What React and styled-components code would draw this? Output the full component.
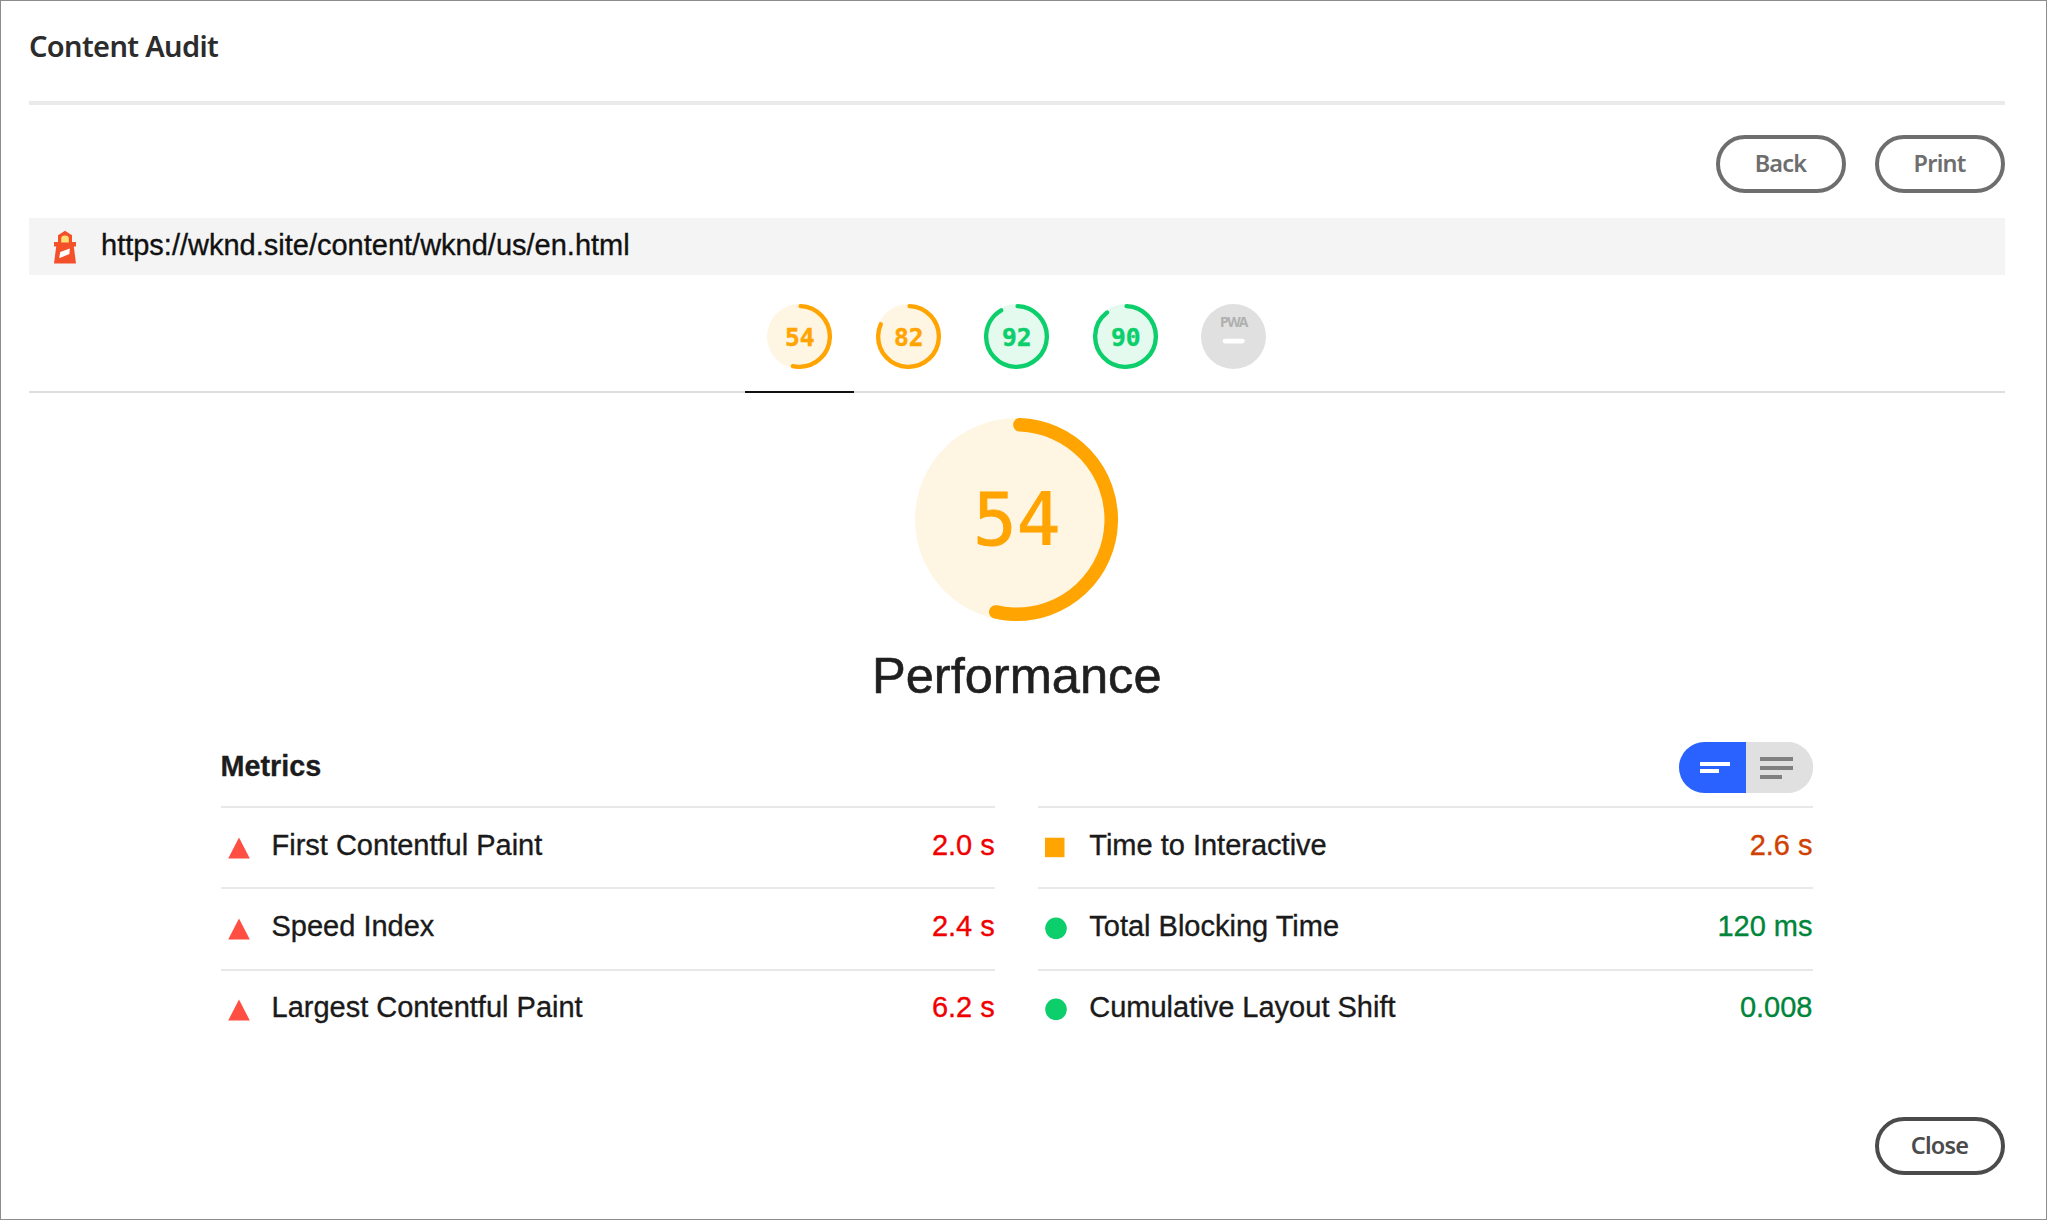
import React from "react";
import styled, { createGlobalStyle } from "styled-components";

const Global = createGlobalStyle`
  * { box-sizing: border-box; }
  body { margin: 0; background: #fff; font-family: "Liberation Sans", Arial, sans-serif; color: #1c1c1c; }
`;

const Dialog = styled.main`
  width: 2047px;
  height: 1220px;
  border: 1px solid #8c8c8c;
  background: #fff;
  padding: 0 41.5px 0 28px;
  display: flex;
  flex-direction: column;
`;

const Header = styled.header`
  height: 104px;
  flex: none;
  border-bottom: 4px solid #eaeaea;
  padding-top: 25px;
`;

const Title = styled.h1`
  margin: 0;
  font: 600 29px/40px "Noto Sans", "Open Sans", sans-serif;
  letter-spacing: -0.65px;
  color: #2c2c2c;
`;

const Toolbar = styled.div`
  display: flex;
  justify-content: flex-end;
  gap: 29px;
  padding: 30px 0 25px;
`;

const PillButton = styled.button`
  width: 130px;
  height: 58px;
  padding: 0 0 3px;
  border: 4px solid ${(p) => p.$color};
  border-radius: 29px;
  background: #fff;
  color: ${(p) => p.$color};
  font: 600 23.5px/30px "Noto Sans", "Open Sans", sans-serif;
  letter-spacing: -0.8px;
`;

const UrlBar = styled.div`
  display: flex;
  align-items: center;
  height: 57px;
  flex: none;
  padding-left: 24px;
  background: #f4f4f4;
  gap: 24px;
`;

const UrlText = styled.span`
  font-size: 29px;
  line-height: 34px;
  color: #111;
  padding-bottom: 4px;
  -webkit-text-stroke: 0.35px currentColor;
`;

const Scores = styled.nav`
  display: flex;
  justify-content: center;
  height: 118px;
  flex: none;
  border-bottom: 2px solid #dedede;
`;

const ScoreTab = styled.div`
  width: 108.6px;
  height: 118px;
  display: flex;
  justify-content: center;
  padding-top: 29px;
  border-bottom: 2px solid ${(p) => (p.$active ? "#111" : "transparent")};
`;

const GaugeSvg = styled.svg`
  display: block;
  flex: none;
`;

const Category = styled.section`
  display: flex;
  flex-direction: column;
  align-items: center;
  padding-top: 25px;
`;

const CategoryName = styled.h2`
  margin: 25px 0 0;
  font-size: 50.6px;
  font-weight: 400;
  line-height: 60px;
  color: #1f1f1f;
  -webkit-text-stroke: 0.6px currentColor;
`;

const MetricsPanel = styled.section`
  width: 1592px;
  margin: 36px 0 0 191.5px;
`;

const MetricsHeader = styled.div`
  display: flex;
  justify-content: space-between;
  height: 64px;
`;

const MetricsTitle = styled.h3`
  margin: 7px 0 0;
  font-size: 28.8px;
  line-height: 34px;
  font-weight: 700;
  -webkit-text-stroke: 0.3px currentColor;
`;

const Toggle = styled.div`
  display: flex;
  width: 134px;
  height: 51px;
  border-radius: 26px;
  overflow: hidden;
  background: #e0e0e0;
`;

const ToggleHalf = styled.div`
  width: 67px;
  display: flex;
  flex-direction: column;
  justify-content: center;
  gap: ${(p) => p.$gap}px;
  padding-left: ${(p) => p.$inset}px;
  background: ${(p) => (p.$on ? "#2962ff" : "#e0e0e0")};
`;

const Stripe = styled.span`
  width: ${(p) => p.$w}px;
  height: 4px;
  background: ${(p) => p.$color};
`;

const Columns = styled.div`
  display: grid;
  grid-template-columns: 1fr 1fr;
  column-gap: 43.5px;
`;

const Metric = styled.div`
  display: flex;
  height: 81.4px;
  border-top: 2px solid #e8e8e8;
  padding: 18.5px 0 0 7px;
  font-size: 29px;
  line-height: 36px;
  -webkit-text-stroke: 0.35px currentColor;
`;

const Marker = styled.svg`
  display: block;
  width: 22px;
  height: 22px;
  margin: 10px 22px 0 0;
  -webkit-text-stroke: 0;
`;

const MetricLabel = styled.span`
  flex: 1;
  color: #1a1a1a;
`;

const MetricValue = styled.span`
  color: ${(p) => p.$color};
`;

const Footer = styled.footer`
  display: flex;
  justify-content: flex-end;
  margin-top: auto;
  padding-bottom: 44px;
`;

const ORANGE = "#ffa400";
const GREEN = "#0cce6b";

function Gauge({ score, size, bold }) {
  const color = score >= 90 ? GREEN : ORANGE;
  const arc = (score / 100) * 351.858 - 4;
  return (
    <GaugeSvg width={size} height={size} viewBox="0 0 120 120">
      <circle cx="60" cy="60" r="60" fill={color} fillOpacity="0.11" />
      <circle
        cx="60"
        cy="60"
        r="56"
        fill="none"
        stroke={color}
        strokeWidth="8"
        strokeLinecap="round"
        strokeDasharray={`${arc} 352`}
        transform="rotate(-87.95 60 60)"
      />
      <text
        x={bold ? 60.5 : 60.2}
        y={bold ? 77.2 : 75}
        textAnchor="middle"
        fill={color}
        stroke={color}
        strokeWidth={bold ? 0.8 : 0.5}
        fontFamily='"DejaVu Sans Mono", monospace'
        fontWeight={bold ? 700 : 400}
        fontSize={bold ? 45.5 : 43}
      >
        {score}
      </text>
    </GaugeSvg>
  );
}

function PwaGauge() {
  return (
    <GaugeSvg width="65" height="65" viewBox="0 0 65 65">
      <circle cx="32.5" cy="32.5" r="32.5" fill="#e0e0e0" />
      <text
        x="32.5"
        y="22.8"
        textAnchor="middle"
        fill="#b0b0b0"
        fontFamily='"Noto Sans", sans-serif'
        fontWeight="700"
        fontSize="14"
        letterSpacing="-1.4"
        textLength="27"
        lengthAdjust="spacingAndGlyphs"
      >
        PWA
      </text>
      <rect x="21.7" y="34.8" width="22" height="4.6" rx="2.3" fill="#fff" />
    </GaugeSvg>
  );
}

function Lighthouse() {
  return (
    <svg width="24" height="34" viewBox="0 0 24 34">
      <path d="M12 0.8 L19 5.2 V12 H23 V16.5 H20.8 L23 33.5 H1 L3.2 16.5 H1 V12 H5 V5.2 Z" fill="#f4502a" />
      <path d="M8.2 12.4 V8.8 a3.8 3.2 0 0 1 7.6 0 V12.4 Z" fill="#fde073" />
      <path d="M7.2 22 L16.8 18.6 L16.4 24 L6.2 28.2 Z" fill="#fff" />
    </svg>
  );
}

const shapes = {
  fail: <path d="M11 0.5 L21.8 21.5 H0.2 Z" fill="#ff4e42" />,
  average: <rect x="0" y="0.7" width="19.5" height="19.5" fill={ORANGE} />,
  pass: <circle cx="11" cy="10.3" r="10.8" fill={GREEN} />,
};

const metrics = [
  { label: "First Contentful Paint", value: "2.0 s", shape: "fail", color: "#f00000" },
  { label: "Time to Interactive", value: "2.6 s", shape: "average", color: "#d04000" },
  { label: "Speed Index", value: "2.4 s", shape: "fail", color: "#f00000" },
  { label: "Total Blocking Time", value: "120 ms", shape: "pass", color: "#00853b" },
  { label: "Largest Contentful Paint", value: "6.2 s", shape: "fail", color: "#f00000" },
  { label: "Cumulative Layout Shift", value: "0.008", shape: "pass", color: "#00853b" },
];

export default function App() {
  return (
    <>
      <Global />
      <Dialog>
        <Header>
          <Title>Content Audit</Title>
        </Header>
        <Toolbar>
          <PillButton $color="#6e6e6e">Back</PillButton>
          <PillButton $color="#6e6e6e">Print</PillButton>
        </Toolbar>
        <UrlBar>
          <Lighthouse />
          <UrlText>https://wknd.site/content/wknd/us/en.html</UrlText>
        </UrlBar>
        <Scores>
          {[54, 82, 92, 90].map((score, i) => (
            <ScoreTab key={score} $active={i === 0}>
              <Gauge score={score} size={65} bold />
            </ScoreTab>
          ))}
          <ScoreTab>
            <PwaGauge />
          </ScoreTab>
        </Scores>
        <Category>
          <Gauge score={54} size={203} />
          <CategoryName>Performance</CategoryName>
        </Category>
        <MetricsPanel>
          <MetricsHeader>
            <MetricsTitle>Metrics</MetricsTitle>
            <Toggle>
              <ToggleHalf $on $gap={3} $inset={21}>
                <Stripe $w={30} $color="#fff" />
                <Stripe $w={19} $color="#fff" />
              </ToggleHalf>
              <ToggleHalf $gap={5} $inset={14}>
                <Stripe $w={33} $color="#808080" />
                <Stripe $w={33} $color="#808080" />
                <Stripe $w={22} $color="#808080" />
              </ToggleHalf>
            </Toggle>
          </MetricsHeader>
          <Columns>
            {metrics.map((m) => (
              <Metric key={m.label}>
                <Marker viewBox="0 0 22 22" overflow="visible">
                  {shapes[m.shape]}
                </Marker>
                <MetricLabel>{m.label}</MetricLabel>
                <MetricValue $color={m.color}>{m.value}</MetricValue>
              </Metric>
            ))}
          </Columns>
        </MetricsPanel>
        <Footer>
          <PillButton $color="#4b4b4b">Close</PillButton>
        </Footer>
      </Dialog>
    </>
  );
}
